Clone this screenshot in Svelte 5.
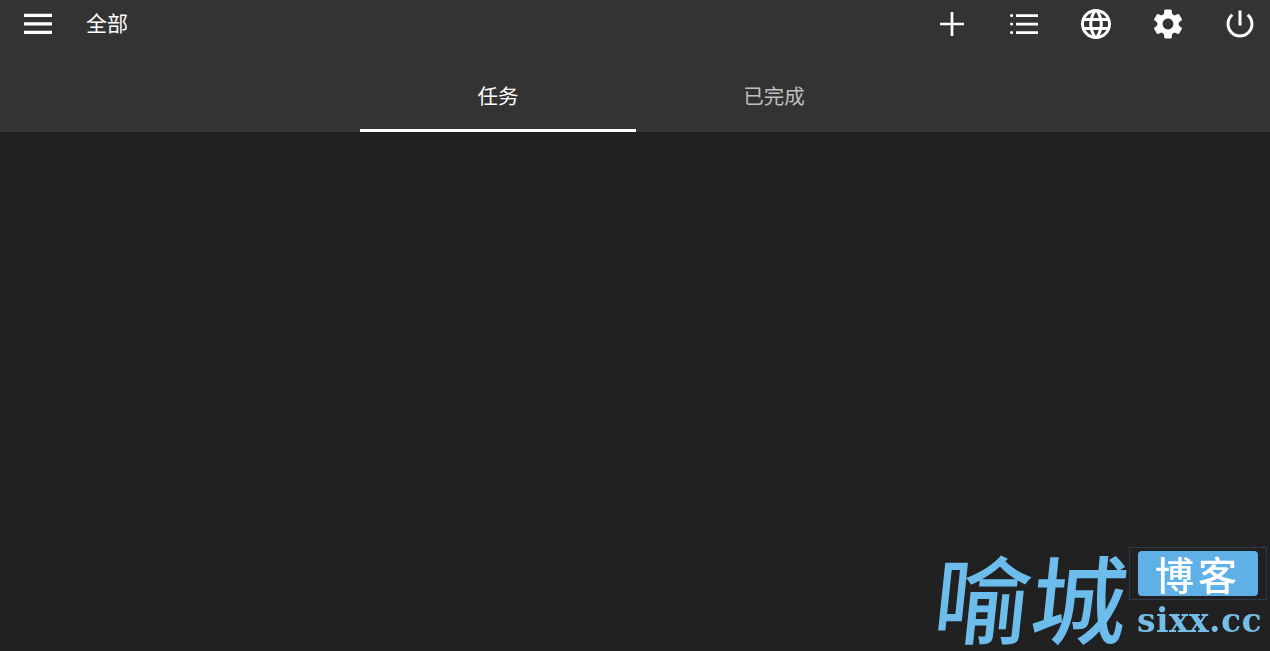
<script>
    const actions = [
        { name: 'add', d: 'M10.65 0h2.7v10.65H24v2.7H13.35V24h-2.7V13.35H0v-2.7h10.65z', box: '0 0 24 24' },
        { name: 'list', d: 'M6 8.200h22v2.700H6zM6 16.700h22v2.700H6zM6 25.200h22v2.700H6zM0 9.500a1.600 1.600 0 1 0 3.200 0a1.600 1.600 0 1 0-3.200 0zM0 18a1.600 1.600 0 1 0 3.200 0a1.600 1.600 0 1 0-3.200 0zM0 26.500a1.600 1.600 0 1 0 3.200 0a1.600 1.600 0 1 0-3.200 0z', box: '0 0 28 36' },
        { name: 'language', d: 'M11.99 2C6.47 2 2 6.48 2 12s4.47 10 9.99 10C17.52 22 22 17.52 22 12S17.52 2 11.99 2zm6.93 6h-2.95c-.32-1.25-.78-2.45-1.38-3.56 1.84.63 3.37 1.91 4.33 3.56zM12 4.040c.83 1.200 1.480 2.530 1.910 3.960h-3.820c.43-1.430 1.080-2.760 1.910-3.960zM4.260 14C4.100 13.360 4 12.690 4 12s.1-1.360.26-2h3.380c-.08.66-.14 1.320-.14 2 0 .68.06 1.340.14 2H4.260zm.82 2h2.950c.32 1.250.78 2.450 1.380 3.560-1.840-.63-3.370-1.900-4.330-3.560zm2.950-8H5.080c.96-1.660 2.490-2.930 4.330-3.560C8.810 5.550 8.350 6.750 8.030 8zM12 19.960c-.83-1.200-1.480-2.530-1.910-3.960h3.820c-.43 1.430-1.080 2.760-1.910 3.960zM14.340 14H9.660c-.09-.66-.16-1.320-.16-2 0-.68.07-1.350.16-2h4.680c.09.65.16 1.320.16 2 0 .68-.07 1.340-.16 2zm.25 5.560c.6-1.110 1.060-2.310 1.380-3.560h2.950c-.96 1.650-2.490 2.930-4.330 3.560zM16.360 14c.08-.66.14-1.320.14-2 0-.68-.06-1.340-.14-2h3.380c.16.64.26 1.310.26 2s-.1 1.360-.26 2h-3.380z', box: '0 0 24 24' },
        { name: 'settings', d: 'M19.14 12.94c.04-.3.06-.61.06-.94 0-.32-.02-.64-.07-.94l2.03-1.58c.18-.14.23-.41.12-.61l-1.92-3.32c-.12-.22-.37-.29-.59-.22l-2.39.96c-.5-.38-1.03-.7-1.62-.94l-.36-2.54c-.04-.24-.24-.41-.48-.41h-3.84c-.24 0-.43.17-.47.41l-.36 2.54c-.59.24-1.13.57-1.62.94l-2.39-.96c-.22-.08-.47 0-.59.22L2.74 8.87c-.12.21-.08.47.12.61l2.03 1.58c-.05.3-.09.63-.09.94s.02.64.07.94l-2.03 1.58c-.18.14-.23.41-.12.61l1.92 3.32c.12.22.37.29.59.22l2.39-.96c.5.38 1.03.7 1.62.94l.36 2.54c.05.24.24.41.48.41h3.84c.24 0 .44-.17.47-.41l.36-2.54c.59-.24 1.13-.56 1.62-.94l2.39.96c.22.08.47 0 .59-.22l1.92-3.32c.12-.22.07-.47-.12-.61l-2.01-1.58zM12 15.600c-1.980 0-3.600-1.620-3.600-3.600s1.620-3.600 3.600-3.600 3.600 1.620 3.600 3.600-1.620 3.600-3.600 3.600z', box: '0 0 24 24' },
        { name: 'power', d: 'M13 3h-2v10h2V3zm4.830 2.170l-1.420 1.420C17.990 7.860 19 9.810 19 12c0 3.870-3.130 7-7 7s-7-3.130-7-7c0-2.190 1.010-4.140 2.580-5.420L6.170 5.170C4.230 6.820 3 9.260 3 12c0 4.970 4.030 9 9 9s9-4.030 9-9c0-2.740-1.230-5.180-3.170-6.830z', box: '0 0 24 24' }
    ]
    const tabs = ['任务', '已完成']
    let active = 0
</script>

<div class="page">
    <header>
        <div class="toolbar">
            <button class="menu-btn" aria-label="menu">
                <svg viewBox="0 0 28 22" width="28" height="22"><path d="M0 .8h28v3.200H0zM0 9.300h28v3.200H0zM0 17.800h28v3.200H0z"/></svg>
            </button>
            <span class="title">全部</span>
            <div class="actions">
                {#each actions as a}
                    <button aria-label={a.name}>
                        <svg class={a.name} viewBox={a.box}><path d={a.d}/></svg>
                    </button>
                {/each}
            </div>
        </div>
        <div class="tabs">
            {#each tabs as t, i}
                <button class="tab" class:active={i === active} on:click={() => active = i}>{t}</button>
            {/each}
        </div>
    </header>

    <!-- watermark sits over the empty list -->
    <div class="mark">
        <span class="mark-name">喻城</span>
        <div class="mark-side">
            <div class="mark-badge"><span>博客</span></div>
            <div class="mark-url">sixx.cc</div>
        </div>
    </div>
</div>

<style>
    :global(body) {
        background: #212121;
    }

    .page {
        position: relative;
        height: 651px;
        overflow: hidden;
        background: #212121;
        font-family: "Noto Sans CJK SC", "Noto Sans", sans-serif;
    }

    header {
        background: #333333;
        height: 132px;
    }

    button {
        border: 0;
        padding: 0;
        background: none;
        color: inherit;
        font: inherit;
    }

    svg {
        display: block;
        fill: #fff;
    }

    .toolbar {
        display: flex;
        align-items: center;
        height: 48px;
        padding-left: 24px;
    }

    .menu-btn {
        width: 28px;
    }

    .title {
        align-self: flex-start;
        margin-left: 34px;
        color: #fff;
        font-size: 21px;
        line-height: 45px;
    }

    .actions {
        display: flex;
        margin-left: auto;
        margin-right: -6px;
    }

    .actions button {
        display: flex;
        justify-content: center;
        align-items: center;
        width: 72px;
        height: 48px;
    }

    .actions svg {
        width: 36px;
        height: 36px;
    }

    .actions svg.list {
        width: 28px;
    }

    .actions svg.add {
        width: 24px;
        height: 24px;
    }

    .tabs {
        display: flex;
        padding-left: 360px;
        height: 84px;
    }

    .tab {
        width: 276px;
        height: 84px;
        padding-top: 13px;
        border-bottom: 3px solid transparent;
        color: rgba(255, 255, 255, 0.7);
        font-size: 20.500px;
    }

    .tab.active {
        border-bottom-color: #fff;
        color: #fff;
    }

    .mark {
        position: absolute;
        left: 935px;
        top: 547px;
        display: flex;
        filter: blur(0.5px);
    }

    .mark-name {
        display: block;
        width: 194px;
        color: #6cbcec;
        font-size: 96px;
        font-weight: 500;
        line-height: 98px;
        letter-spacing: 1px;
        white-space: nowrap;
        transform: skewX(-6deg);
    }

    .mark-badge {
        box-sizing: border-box;
        width: 138px;
        height: 53px;
        padding: 3px 8px;
        border: 1px solid #2b3a44;
    }

    .mark-badge span {
        display: block;
        height: 45px;
        border-radius: 4px;
        background: #5eb0e6;
        color: #fff;
        font-size: 39px;
        font-weight: 500;
        line-height: 45px;
        text-align: center;
        letter-spacing: 4px;
    }

    .mark-url {
        margin-top: 1px;
        padding-left: 8px;
        color: #74bde8;
        font-family: "DejaVu Serif", "Liberation Serif", serif;
        font-size: 33px;
        font-weight: 700;
        line-height: 40px;
        letter-spacing: 0.4px;
        white-space: nowrap;
    }
</style>
